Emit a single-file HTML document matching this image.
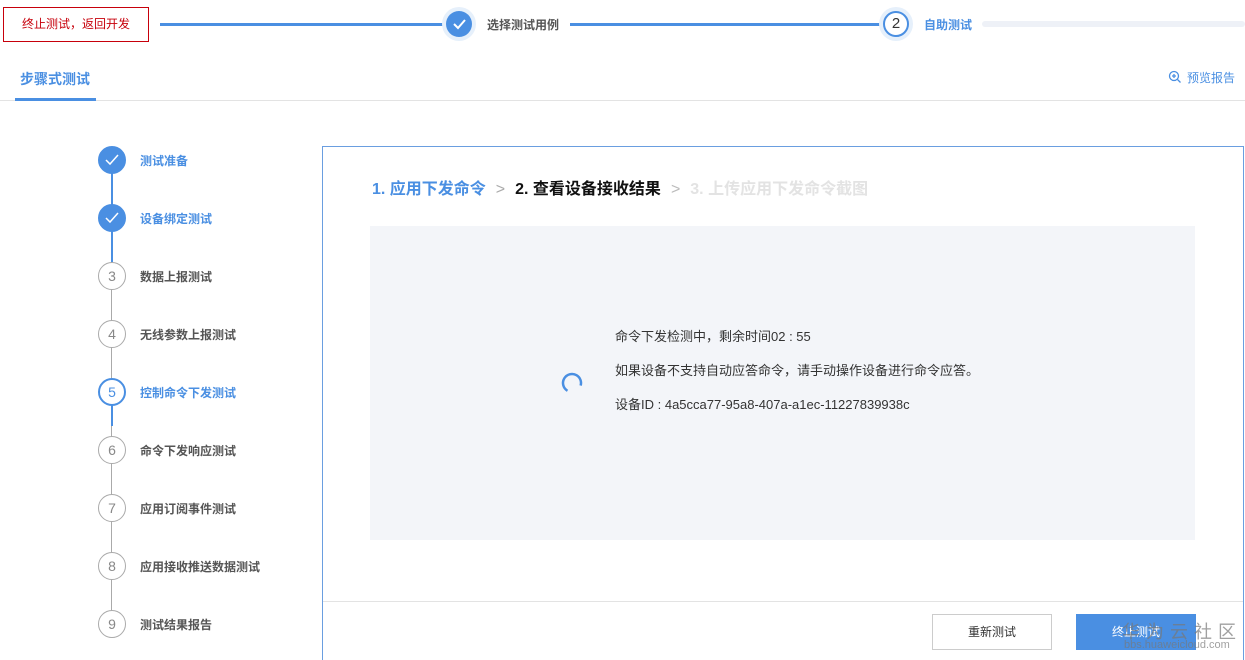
<!DOCTYPE html>
<html style="overflow:hidden;height:660px"><head><meta charset="utf-8"><style>
*{margin:0;padding:0;box-sizing:border-box}
body{width:1245px;height:660px;overflow:hidden;background:#fff;font-family:"Liberation Sans","Noto Sans CJK SC",sans-serif;font-size:12px;color:#333;position:relative}
.a{position:absolute}
.circ{position:absolute;width:28px;height:28px;border-radius:50%;border:1px solid #aaa;background:#fff;color:#888;font-size:14px;text-align:center;line-height:26px}
.done{background:#4a8fe2;border-color:#4a8fe2}
.cur{border:2px solid #4a8fe2;color:#4a8fe2;line-height:24px}
.lbl{position:absolute;left:140px;font-size:12px;font-weight:bold;color:#555}
.blue{color:#4a8fe2}
</style></head><body>
<div class="a" style="left:3px;top:7px;width:146px;height:35px;border:1px solid #c7000b;color:#c7000b;font-size:12px;text-align:center;line-height:33px">终止测试，返回开发</div>
<div class="a" style="left:160px;top:23px;width:290px;height:3px;background:#4a8fe2"></div>
<div class="a" style="left:442px;top:7px;width:34px;height:34px;border-radius:50%;background:#e6f0fb"></div>
<div class="a" style="left:446px;top:11px;width:26px;height:26px;border-radius:50%;background:#4a8fe2"></div>
<svg class="a" style="left:446px;top:11px" width="26" height="26"><path d="M8 13l4 4 7-8" stroke="#fff" stroke-width="2" fill="none"/></svg>
<div class="a" style="left:487px;top:16px;font-weight:bold;color:#555">选择测试用例</div>
<div class="a" style="left:570px;top:23px;width:315px;height:3px;background:#4a8fe2"></div>
<div class="a" style="left:879px;top:7px;width:34px;height:34px;border-radius:50%;background:#e6f0fb"></div>
<div class="a" style="left:883px;top:11px;width:26px;height:26px;border-radius:50%;background:#fff;border:2px solid #4a8fe2;text-align:center;line-height:22px;font-size:15px;color:#333">2</div>
<div class="a blue" style="left:924px;top:16px;font-weight:bold">自助测试</div>
<div class="a" style="left:982px;top:21px;width:263px;height:6px;background:#eef1f7;border-radius:3px"></div>
<div class="a blue" style="left:20px;top:69px;font-size:14px;font-weight:bold">步骤式测试</div>
<div class="a" style="left:0;top:100px;width:1245px;height:1px;background:#e3e3e3"></div>
<div class="a" style="left:15px;top:98px;width:81px;height:3px;background:#4a8fe2"></div>
<svg class="a" style="left:1168px;top:70px" width="14" height="14"><circle cx="6" cy="6" r="4.5" stroke="#4a8fe2" fill="none" stroke-width="1.3"/><path d="M4 6h4M6 4v4M9.5 9.5l3 3" stroke="#4a8fe2" stroke-width="1.3"/></svg>
<div class="a blue" style="left:1187px;top:69px;font-size:12px">预览报告</div>

<div class="a" style="left:111px;top:262px;width:1px;height:362px;background:#aaa"></div>
<div class="a" style="left:111px;top:160px;width:2px;height:102px;background:#4a8fe2"></div>
<div class="a" style="left:111px;top:404px;width:2px;height:22px;background:#4a8fe2"></div>
<div class="circ done" style="left:98px;top:146px"></div>
<svg class="a" style="left:98px;top:146px" width="28" height="28"><path d="M8 14l4 4 8-9" stroke="#fff" stroke-width="1.5" fill="none"/></svg>
<div class="lbl blue" style="top:152px">测试准备</div>
<div class="circ done" style="left:98px;top:204px"></div>
<svg class="a" style="left:98px;top:204px" width="28" height="28"><path d="M8 14l4 4 8-9" stroke="#fff" stroke-width="1.5" fill="none"/></svg>
<div class="lbl blue" style="top:210px">设备绑定测试</div>
<div class="circ" style="left:98px;top:262px">3</div><div class="lbl" style="top:268px">数据上报测试</div>
<div class="circ" style="left:98px;top:320px">4</div><div class="lbl" style="top:326px">无线参数上报测试</div>
<div class="circ cur" style="left:98px;top:378px">5</div><div class="lbl blue" style="top:384px">控制命令下发测试</div>
<div class="circ" style="left:98px;top:436px">6</div><div class="lbl" style="top:442px">命令下发响应测试</div>
<div class="circ" style="left:98px;top:494px">7</div><div class="lbl" style="top:500px">应用订阅事件测试</div>
<div class="circ" style="left:98px;top:552px">8</div><div class="lbl" style="top:558px">应用接收推送数据测试</div>
<div class="circ" style="left:98px;top:610px">9</div><div class="lbl" style="top:616px">测试结果报告</div>

<div class="a" style="left:322px;top:146px;width:922px;height:514px;border:1px solid #6a9ee0;border-bottom:none"></div>
<div class="a" style="left:372px;top:175px;font-size:16px;font-weight:bold;white-space:nowrap"><span class="blue">1. 应用下发命令</span><span style="color:#aaa;margin:0 10px;font-weight:normal">&gt;</span><span style="color:#111">2. 查看设备接收结果</span><span style="color:#bbb;margin:0 10px;font-weight:normal">&gt;</span><span style="color:#e3e3e3">3. 上传应用下发命令截图</span></div>
<div class="a" style="left:370px;top:226px;width:825px;height:314px;background:#f3f5f9"></div>
<svg class="a" style="left:560px;top:371px" width="24" height="24"><circle cx="12" cy="12" r="9" stroke="#4a8fe2" stroke-width="2.5" fill="none" stroke-dasharray="40 17" transform="rotate(120 12 12)"/></svg>
<div class="a" style="left:615px;top:320px;font-size:13px;color:#333;line-height:34px;white-space:nowrap">命令下发检测中，剩余时间02 : 55<br>如果设备不支持自动应答命令，请手动操作设备进行命令应答。<br>设备ID : 4a5cca77-95a8-407a-a1ec-11227839938c</div>
<div class="a" style="left:323px;top:601px;width:920px;height:1px;background:#e3e3e3"></div>
<div class="a" style="left:932px;top:614px;width:120px;height:36px;border:1px solid #ccc;text-align:center;line-height:34px;color:#333">重新测试</div>
<div class="a" style="left:1076px;top:614px;width:120px;height:36px;background:#4a8fe2;text-align:center;line-height:36px;color:#fff">终止测试</div>
<div class="a" style="left:1122px;top:618px;font-size:18px;color:rgba(120,120,120,.7);letter-spacing:6px">华为云社区</div>
<div class="a" style="left:1124px;top:639px;font-size:11px;color:rgba(120,120,120,.7)">bbs.huaweicloud.com</div>
</body></html>
